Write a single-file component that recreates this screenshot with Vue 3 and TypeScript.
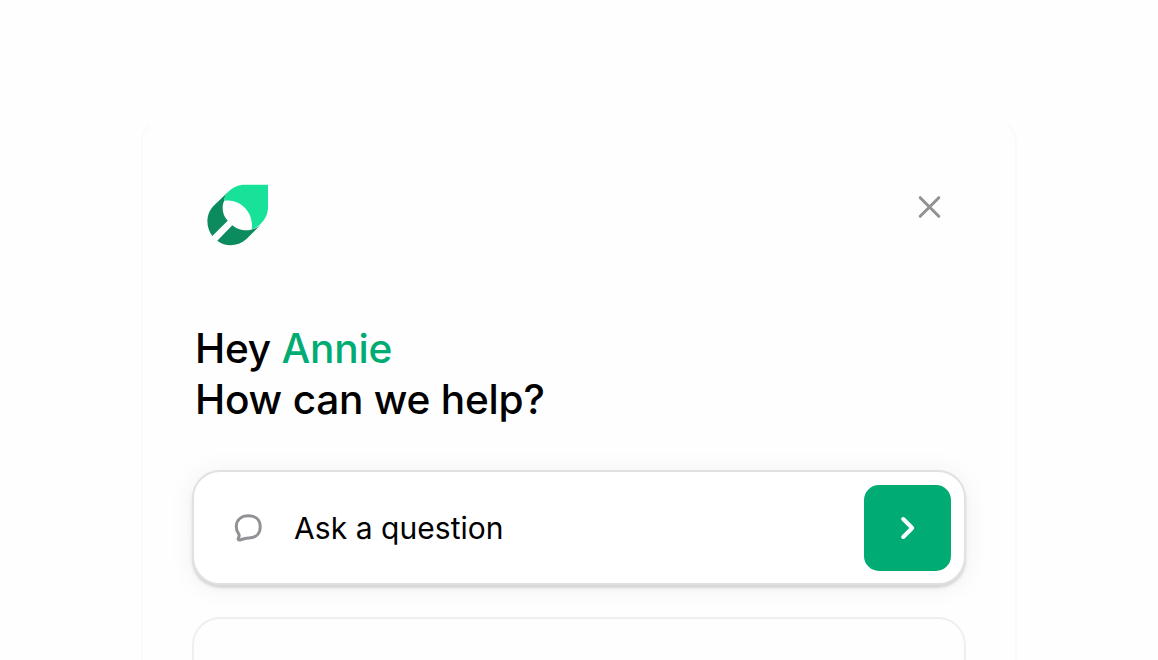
<script setup lang="ts">
import { ref } from 'vue';

const visible = ref(true)
const userName = ref('Annie')

function onClose(): void {
  visible.value = false;
}

function onAsk(): void {
  console.log('Ask a question');
}
</script>

<template>
  <div class="page">
    <main v-if="visible" class="messenger">
      <header class="top_bar">
        <svg class="logo" width="62" height="62" viewBox="0 0 62 62">
          <path fill="#0c8c5e" d="M21 8 L8 20.5 C-1.8 29 -1.5 43 5.3 52 L20.7 36.7 C15 31 14.5 22 17.3 16.8 C17.3 13.5 18.5 10.8 21 8Z" />
          <path fill="#0c8c5e" d="M25.3 41.3 L10.3 56.7 C19 63.5 31 62.5 39.5 55 L54 40.5 C51.5 43 48 44.7 44.7 45.4 C38 47.5 31 46 25.3 41.3Z" />
          <path fill="#18e299" d="M61 .7 H38 C31 .7 25.5 3.3 21 8 C18.5 10.5 17 13.5 17.3 16.8 C33 14 47.5 29 44.7 45.2 C48 44.5 51.5 42 54 39.5 C58.5 35 61 29.5 61 23Z" />
        </svg>
        <button class="close" aria-label="Close" @click="onClose">
          <svg width="24" height="24" viewBox="0 0 24 24">
            <path d="M2.2 2.7 L20.8 21.3 M20.8 2.7 L2.2 21.3" />
          </svg>
        </button>
      </header>

      <h1>Hey <span class="name">{{ userName }}</span><br>How can we help?</h1>

      <div class="ask" @click="onAsk">
        <svg class="bubble" width="30" height="30" viewBox="0 0 30 30">
          <path d="M14.5 2.8 C22 2.8 26.2 7 26.2 13.8 C26.2 20.8 21.8 24.9 15 24.9 C11 24.9 9.5 26.2 6 27 C4.4 27.3 3.7 26.2 4.5 24.8 C5.4 23.3 5.5 22 4.4 20.4 C3 18.4 2.3 16.4 2.3 13.8 C2.3 7 7 2.8 14.5 2.8Z" />
        </svg>
        <span class="label">Ask a question</span>
        <button class="send" aria-label="Send">
          <svg width="16" height="24" viewBox="0 0 16 24">
            <path d="M3.2 3 L12.2 12 L3.2 21" />
          </svg>
        </button>
      </div>

      <div class="panel"></div>
    </main>
  </div>
</template>

<style>
body {
  overflow: hidden;
  background-color: #fff;
}
</style>

<style scoped>
.page {
  box-sizing: border-box;
  height: 660px;
  padding: 120px 141px 0;
  overflow: hidden;
  background: #fefefe;
  font-family: Inter, "Liberation Sans", sans-serif;
}

.messenger {
  box-sizing: border-box;
  height: 800px;
  padding: 64px 49px 0 50px;
  border: 2px solid #fafafa;
  border-top: 1px solid #fdfdfd;
  border-radius: 22px;
  background: #fefefe;
}

.top_bar {
  display: flex;
  justify-content: space-between;
  height: 137px;
  padding: 1px 24px 0 14px;
}

.logo {
  display: block;
  margin-top: -2px;
}

button {
  padding: 0;
  border: none;
  background: none;
  cursor: pointer;
}

.close {
  width: 24px;
  height: 24px;
  margin-top: 9px;
}

svg {
  display: block;
}

.close path {
  fill: none;
  stroke: #929296;
  stroke-width: 3;
  stroke-linecap: round;
}

h1 {
  margin: 0 0 45px 2px;
  font-size: 40.6px;
  line-height: 51px;
  font-weight: 500;
  letter-spacing: -0.22px;
  color: #000;
}

.name {
  color: #00ac73;
}

.ask {
  box-sizing: border-box;
  display: flex;
  align-items: center;
  height: 115px;
  padding: 0 13px 0 38px;
  margin-left: -1px;
  border: 2px solid #e0e2e1;
  border-radius: 28px;
  background: #fff;
  box-shadow: 0 3px 2px rgba(0, 0, 0, 0.1), 0 3px 6px rgba(0, 0, 0, 0.04), 0 2px 28px rgba(0, 0, 0, 0.06);
}

.bubble {
  margin-left: 2px;
}

.bubble path {
  fill: none;
  stroke: #929296;
  stroke-width: 3;
  stroke-linejoin: round;
}

.label {
  flex: 1;
  margin-left: 30px;
  font-size: 30px;
  letter-spacing: 0.05px;
  color: #000;
}

.send {
  display: flex;
  align-items: center;
  justify-content: center;
  width: 87px;
  height: 86px;
  margin-top: 1px;
  border-radius: 15px;
  background: #00ac73;
}

.send path {
  fill: none;
  stroke: #fff;
  stroke-width: 4;
  stroke-linecap: round;
  stroke-linejoin: round;
}

.panel {
  box-sizing: border-box;
  height: 200px;
  margin-top: 32px;
  margin-left: -1px;
  border: 2px solid #efefef;
  border-radius: 28px;
  background: #fefefe;
}
</style>
